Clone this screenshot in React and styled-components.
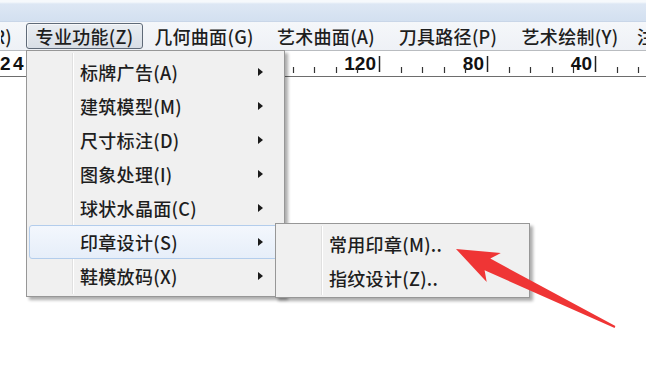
import React from 'react';
import styled, { createGlobalStyle, css } from 'styled-components';

const GlobalStyle = createGlobalStyle`
  html, body { margin: 0; padding: 0; background: #ffffff; }
  body { font-family: "Noto Sans CJK SC", "Noto Sans", sans-serif; }
`;

const Window = styled.div`
  position: relative;
  width: 646px;
  height: 390px;
  overflow: hidden;
  background: #ffffff;
  display: flex;
  flex-direction: column;
`;

const TitleBar = styled.div`
  height: 22px;
  flex: none;
  background: linear-gradient(#f6f9fc 0px, #f6f9fc 2px, #dde7f4 4px, #d3e0f0 100%);
  border-bottom: 1px solid #c9d6e8;
  box-sizing: border-box;
`;

const MenuBar = styled.div`
  height: 28px;
  flex: none;
  display: flex;
  align-items: center;
  background: linear-gradient(#f5f7fa, #eef1f6);
  overflow: hidden;
  white-space: nowrap;
  font-size: 18px;
  font-weight: 500;
  letter-spacing: 0.3px;
  color: #1e1e1e;
`;

const MenuBarItem = styled.div`
  flex: none;
  width: ${(p) => p.$w || 122}px;
  height: 26px;
  box-sizing: border-box;
  display: flex;
  align-items: center;
  justify-content: ${(p) => (p.$clip ? 'flex-end' : p.$start ? 'flex-start' : 'center')};
  padding: ${(p) => (p.$clip ? '0 13px 0 0' : p.$start ? '0 0 0 5px' : '0')};
  overflow: hidden;
  border: 1px solid transparent;
  border-radius: 3px;
  ${(p) =>
    p.$pressed &&
    css`
      border-color: #5f6a78;
      background: linear-gradient(#e9edf2, #d8dee6);
      box-shadow: inset 1px 1px 0 rgba(255, 255, 255, 0.6);
    `}
`;

const RulerWrap = styled.div`
  height: 27px;
  flex: none;
  background: #ffffff;
  border-top: 1px solid #b9bcc0;
  border-bottom: 1px solid #6d6d6d;
  box-sizing: border-box;
`;

const Canvas = styled.div`
  flex: 1;
  background: #ffffff;
`;

const Menu = styled.div`
  position: absolute;
  left: ${(p) => p.$left}px;
  top: ${(p) => p.$top}px;
  width: ${(p) => p.$width}px;
  box-sizing: border-box;
  border: 1px solid #979797;
  background: #f0f0f0;
  box-shadow: 3px 3px 3px rgba(0, 0, 0, 0.32);
  padding: ${(p) => p.$pad};
  z-index: ${(p) => p.$z || 5};
  &::before {
    content: '';
    position: absolute;
    left: 45px;
    top: 2px;
    bottom: 2px;
    width: 1px;
    background: #e0e0e0;
    box-shadow: 1px 0 0 #ffffff;
  }
`;

const Row = styled.div`
  position: relative;
  height: 34px;
  box-sizing: border-box;
  display: grid;
  grid-template-columns: 50px 1fr 24px;
  align-items: center;
  border: 1px solid transparent;
  border-radius: 3px;
  font-size: 18px;
  font-weight: 500;
  letter-spacing: 0.3px;
  color: #1e1e1e;
  white-space: nowrap;
  ${(p) =>
    p.$active &&
    css`
      border-color: #b3cdec;
      background: linear-gradient(#f3f7fd, #e6eef9);
    `}
`;

const Label = styled.span`
  grid-column: 2;
`;

const SubArrow = styled.span`
  grid-column: 3;
  width: 0;
  height: 0;
  border-top: 4px solid transparent;
  border-bottom: 4px solid transparent;
  border-left: 5px solid #1a1a1a;
  margin-left: 1px;
`;

const SubMenuAnchor = styled.div`
  position: absolute;
  left: 245px;
  top: -3px;
`;

const Annotation = styled.svg`
  position: absolute;
  left: 0;
  top: 0;
  pointer-events: none;
  z-index: 20;
`;

const menuBarItems = [
  { label: '编辑(R)', clip: true, w: 26 },
  { label: '专业功能(Z)', pressed: true, w: 117 },
  { label: '几何曲面(G)' },
  { label: '艺术曲面(A)' },
  { label: '刀具路径(P)' },
  { label: '艺术绘制(Y)' },
  { label: '注释(H)', start: true, w: 60 },
];

const menuItems = [
  '标牌广告(A)',
  '建筑模型(M)',
  '尺寸标注(D)',
  '图象处理(I)',
  '球状水晶面(C)',
  '印章设计(S)',
  '鞋模放码(X)',
];

const subItems = ['常用印章(M)..', '指纹设计(Z)..'];

function Ruler() {
  const majors = [
    { x: 379, label: '120' },
    { x: 487, label: '80' },
    { x: 595, label: '40' },
  ];
  const step = 21.6;
  const minors = [];
  const allMajors = [271, 379, 487, 595, 703];
  allMajors.forEach((m) => {
    for (let k = 1; k <= 4; k++) minors.push(m - k * step);
  });
  const font = 'Liberation Sans, Arial, sans-serif';
  return (
    <svg width="646" height="25" viewBox="0 0 646 25">
      <text x="0" y="19" fontFamily={font} fontWeight="bold" fontSize="19" letterSpacing="2.5" fill="#111">
        240
      </text>
      {majors.map((m) => (
        <g key={m.label}>
          <text x={m.x - 3} y="19" textAnchor="end" fontFamily={font} fontWeight="bold" fontSize="19" fill="#111">
            {m.label}
          </text>
          <line x1={m.x + 0.5} y1="5" x2={m.x + 0.5} y2="21" stroke="#222" strokeWidth="1.5" />
        </g>
      ))}
      {minors.map((x, i) => (
        <line key={i} x1={Math.round(x) + 0.5} y1="16" x2={Math.round(x) + 0.5} y2="22" stroke="#333" strokeWidth="1.2" />
      ))}
    </svg>
  );
}

export default function App() {
  const T = [456, 249];
  const tail = [615, 327];
  const dx = tail[0] - T[0];
  const dy = tail[1] - T[1];
  const len = Math.hypot(dx, dy);
  const d = [dx / len, dy / len];
  const n = [-d[1], d[0]];
  const at = (l, w) => [T[0] + l * d[0] + w * n[0], T[1] + l * d[1] + w * n[1]];
  const pts = [T, at(42, -16), at(35, -6.5), at(len, -1), at(len, 1), at(35, 6.5), at(42, 16)]
    .map((p) => p.map((v) => v.toFixed(1)).join(','))
    .join(' ');

  return (
    <>
      <GlobalStyle />
      <Window>
        <TitleBar />
        <MenuBar>
          {menuBarItems.map((it) => (
            <MenuBarItem key={it.label} $w={it.w} $clip={it.clip} $pressed={it.pressed} $start={it.start}>
              {it.label}
            </MenuBarItem>
          ))}
        </MenuBar>
        <RulerWrap>
          <Ruler />
        </RulerWrap>
        <Canvas />

        <Menu $left={26} $top={50} $width={259} $pad="4px 2px 3px 2px">
          {menuItems.map((label, i) => (
            <Row key={label} $active={i === 5}>
              <Label>{label}</Label>
              <SubArrow />
              {i === 5 && (
                <SubMenuAnchor>
                  <Menu $left={0} $top={0} $width={255} $pad="3px 2px 2px 2px" $z={6}>
                    {subItems.map((s) => (
                      <Row key={s}>
                        <Label>{s}</Label>
                      </Row>
                    ))}
                  </Menu>
                </SubMenuAnchor>
              )}
            </Row>
          ))}
        </Menu>

        <Annotation width="646" height="390" viewBox="0 0 646 390">
          <polygon points={pts} fill="#ef3535" />
        </Annotation>
      </Window>
    </>
  );
}
